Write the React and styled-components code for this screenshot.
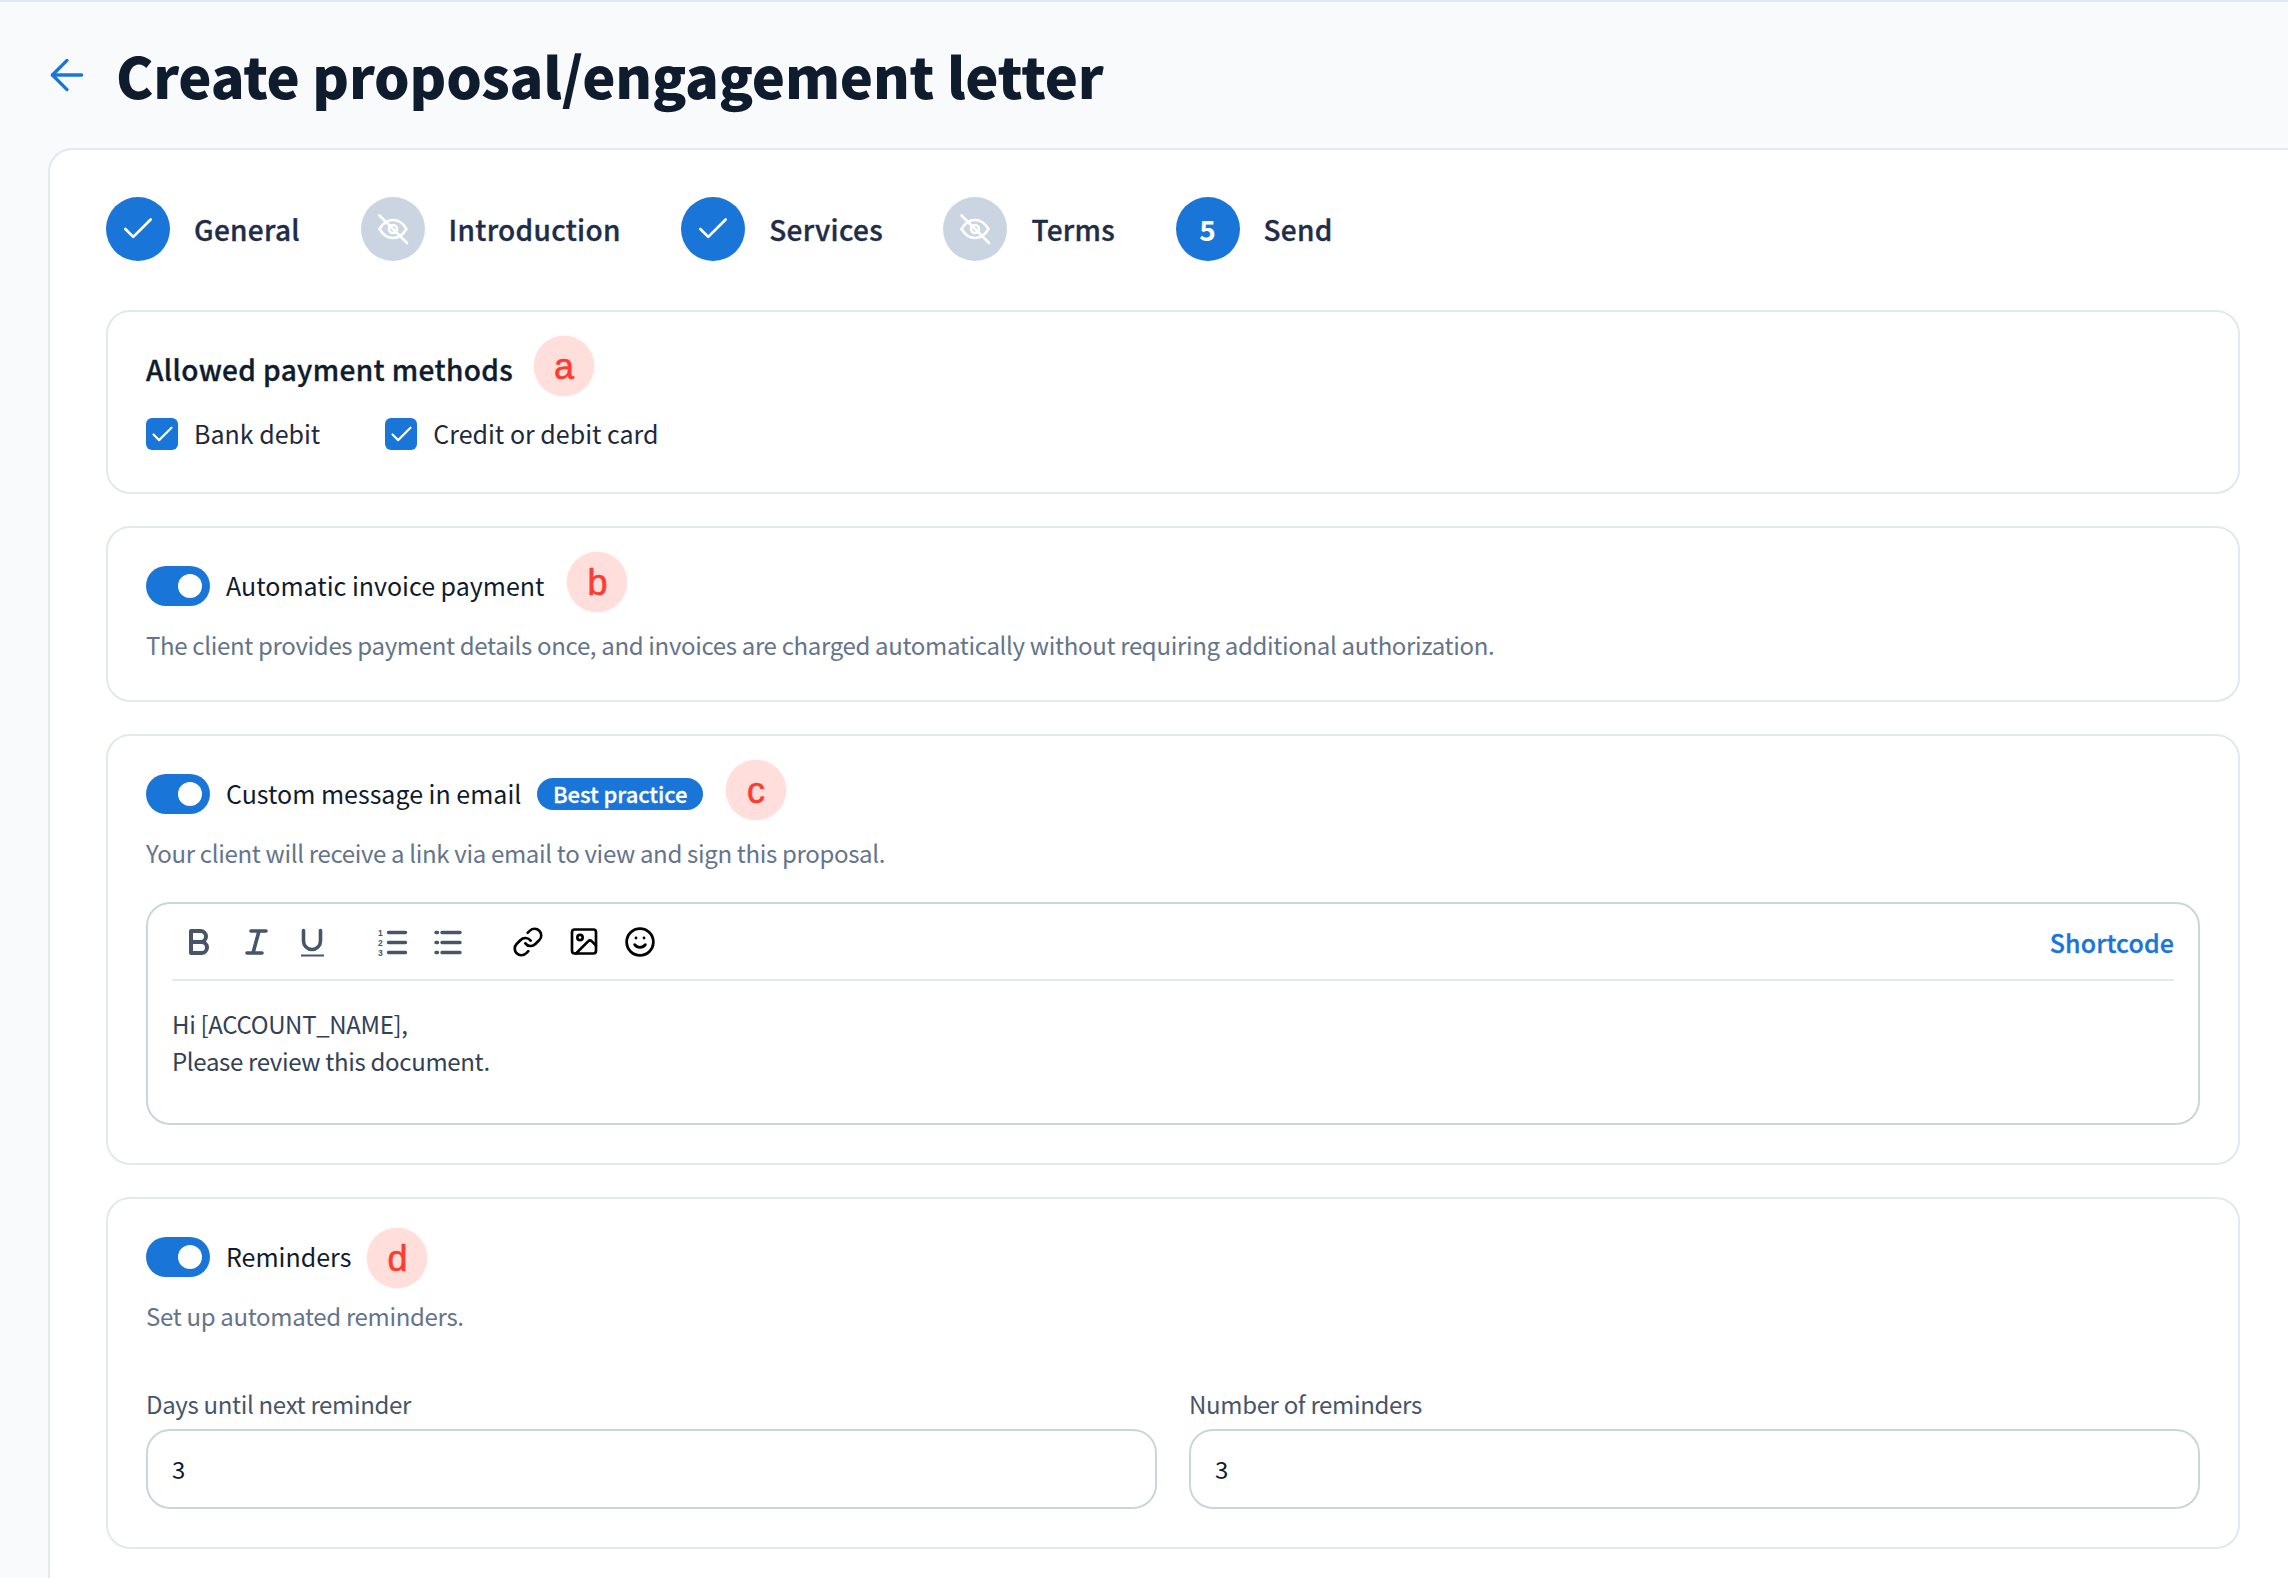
import React from "react";
import styled, { createGlobalStyle } from "styled-components";
import { ArrowLeft, Check, Link, Image, Smile } from "lucide-react";

const GlobalStyle = createGlobalStyle`
  html, body {
    margin: 0;
    padding: 0;
    height: 1578px;
    overflow: hidden;
    background: #f8fafc;
    font-family: "Noto Sans CJK SC", "Noto Sans", sans-serif;
  }
  * { box-sizing: border-box; }
`;

const steps = [
  { label: "General", state: "done" },
  { label: "Introduction", state: "hidden" },
  { label: "Services", state: "done" },
  { label: "Terms", state: "hidden" },
  { label: "Send", state: "current", number: 5 },
];

const HiddenIcon = () => (
  <EyeSvg viewBox="0 0 32 32">
    <path d="M2.5 16C7 8.5 12 7 16 7s9 1.5 13.5 9C25 23.5 20 25 16 25S7 23.5 2.5 16Z" />
    <circle cx="16" cy="16" r="4" />
    <path d="M2.5 2.5l27.5 27.5" strokeLinecap="round" />
  </EyeSvg>
);

const BoldIcon = () => (
  <ToolSvg viewBox="0 0 32 32">
    <path d="M7 5h9.5a5.5 5.5 0 0 1 0 11H7ZM7 16h10.5a5.5 5.5 0 0 1 0 11H7Z" strokeWidth="4" strokeLinejoin="round" />
  </ToolSvg>
);

const ItalicIcon = () => (
  <ToolSvg viewBox="0 0 32 32">
    <path d="M11 5h15M7 27h15M19 5l-6 22" strokeWidth="3.6" strokeLinecap="round" />
  </ToolSvg>
);

const UnderlineIcon = () => (
  <ToolSvg viewBox="0 0 32 32">
    <path d="M7.5 4.5V15a8.5 8.5 0 0 0 17 0V4.5" strokeWidth="3.6" strokeLinecap="round" />
    <path d="M5 29.5h23" strokeWidth="2" />
  </ToolSvg>
);

const OrderedIcon = () => (
  <ToolSvg viewBox="0 0 32 32">
    <path d="M12.5 6.5h17M12.5 16.5h17M12.5 26.5h17" strokeWidth="3.4" strokeLinecap="round" />
    <ListDigit x="2" y="9.5">1</ListDigit>
    <ListDigit x="2" y="19.5">2</ListDigit>
    <ListDigit x="2" y="29.5">3</ListDigit>
  </ToolSvg>
);

const BulletIcon = () => (
  <ToolSvg viewBox="0 0 32 32">
    <path d="M10 6.5h18M10 16.5h18M10 26.5h18" strokeWidth="3.4" strokeLinecap="round" />
    <path d="M4 6.5h1.5M4 16.5h1.5M4 26.5h1.5" strokeWidth="3.4" strokeLinecap="round" />
  </ToolSvg>
);

const Toggle = () => (
  <ToggleTrack>
    <ToggleKnob />
  </ToggleTrack>
);

const App = () => {
  return (
    <>
      <GlobalStyle />
      <Page>
        <Header>
          <BackButton>
            <ArrowLeft size={50} strokeWidth={1.6} />
          </BackButton>
          <Title>Create proposal/engagement letter</Title>
        </Header>
        <Panel>
          <Stepper>
            {steps.map((step) => (
              <Step key={step.label}>
                <StepCircle $state={step.state}>
                  {step.state === "done" && <Check size={38} strokeWidth={1.7} />}
                  {step.state === "hidden" && <HiddenIcon />}
                  {step.number}
                </StepCircle>
                <StepLabel>{step.label}</StepLabel>
              </Step>
            ))}
          </Stepper>

          <Cards>
            <Card $h={184}>
              <TitleRow>
                <CardTitle>Allowed payment methods</CardTitle>
                <Marker $left={21} $shift={-4}>a</Marker>
              </TitleRow>
              <Checks>
                <CheckItem>
                  <CheckBox><Check size={27} strokeWidth={1.9} /></CheckBox>
                  <span>Bank debit</span>
                </CheckItem>
                <CheckItem>
                  <CheckBox><Check size={27} strokeWidth={1.9} /></CheckBox>
                  <span>Credit or debit card</span>
                </CheckItem>
              </Checks>
            </Card>

            <Card $h={176}>
              <ToggleRow>
                <Toggle />
                <ToggleLabel>Automatic invoice payment</ToggleLabel>
                <Marker $left={23} $shift={-4}>b</Marker>
              </ToggleRow>
              <Description>
                The client provides payment details once, and invoices are charged automatically without requiring additional authorization.
              </Description>
            </Card>

            <Card $h={431}>
              <ToggleRow>
                <Toggle />
                <ToggleLabel>Custom message in email</ToggleLabel>
                <Pill>Best practice</Pill>
                <Marker $left={23} $shift={-4}>c</Marker>
              </ToggleRow>
              <Description>Your client will receive a link via email to view and sign this proposal.</Description>
              <Editor>
                <Toolbar>
                  <ToolGroup>
                    <BoldIcon />
                    <ItalicIcon />
                    <UnderlineIcon />
                  </ToolGroup>
                  <ToolGroup>
                    <OrderedIcon />
                    <BulletIcon />
                  </ToolGroup>
                  <ToolGroup>
                    <BlackTool><Link size={36} strokeWidth={2} /></BlackTool>
                    <BlackTool><Image size={39} strokeWidth={2} /></BlackTool>
                    <BlackTool><Smile size={34} strokeWidth={2.1} /></BlackTool>
                  </ToolGroup>
                  <Shortcode>Shortcode</Shortcode>
                </Toolbar>
                <EditorBody>
                  <div>Hi [ACCOUNT_NAME],</div>
                  <div>Please review this document.</div>
                </EditorBody>
              </Editor>
            </Card>

            <Card $h={352}>
              <ToggleRow>
                <Toggle />
                <ToggleLabel>Reminders</ToggleLabel>
                <Marker $left={16} $shift={1}>d</Marker>
              </ToggleRow>
              <Description>Set up automated reminders.</Description>
              <Fields>
                <Field>
                  <FieldLabel>Days until next reminder</FieldLabel>
                  <InputBox>3</InputBox>
                </Field>
                <Field>
                  <FieldLabel>Number of reminders</FieldLabel>
                  <InputBox>3</InputBox>
                </Field>
              </Fields>
            </Card>
          </Cards>
        </Panel>
      </Page>
    </>
  );
};

export default App;

const Page = styled.div`
  height: 1578px;
  overflow: hidden;
  border-top: 2px solid #e2e8f0;
  background: #f8fafc;
`;

const Header = styled.header`
  display: flex;
  align-items: center;
  height: 146px;
  padding-left: 42px;
`;

const BackButton = styled.div`
  display: flex;
  width: 74px;
  color: #1976d8;
`;

const Title = styled.h1`
  margin: 0 0 1px;
  font-size: 56px;
  line-height: 76px;
  font-weight: 900;
  letter-spacing: -0.22px;
  color: #0f1c2e;
`;

const Panel = styled.main`
  margin-left: 48px;
  padding: 47px 48px 0 56px;
  height: 1500px;
  background: #fff;
  border: 2px solid #e2e8f0;
  border-right: 0;
  border-bottom: 0;
  border-top-left-radius: 24px;
`;

const Stepper = styled.div`
  display: flex;
  gap: 60.5px;
  height: 64px;
`;

const Step = styled.div`
  display: flex;
  align-items: center;
  gap: 24px;
`;

const StepCircle = styled.div`
  display: flex;
  align-items: center;
  justify-content: center;
  width: 64px;
  height: 64px;
  border-radius: 50%;
  color: #fff;
  font-size: 28px;
  font-weight: 700;
  background: ${({ $state }) => ($state === "hidden" ? "#cbd5e1" : "#1976d8")};
`;

const EyeSvg = styled.svg`
  width: 32px;
  height: 32px;
  fill: none;
  stroke: #fff;
  stroke-width: 2.6;
`;

const StepLabel = styled.span`
  font-size: 28px;
  font-weight: 500;
  letter-spacing: 0.3px;
  color: #1f2d48;
  -webkit-text-stroke: 0.35px #1f2d48;
`;

const Cards = styled.div`
  display: flex;
  flex-direction: column;
  gap: 32px;
  margin-top: 49px;
`;

const Card = styled.section`
  height: ${({ $h }) => $h}px;
  padding: 38px 38px 0;
  border: 2px solid #e2e8f0;
  border-radius: 24px;
  background: #fff;
`;

const TitleRow = styled.div`
  display: flex;
  align-items: center;
  height: 40px;
`;

const CardTitle = styled.h2`
  margin: 0 0 2px;
  font-size: 28px;
  font-weight: 500;
  letter-spacing: 0.38px;
  color: #0f1c2e;
  -webkit-text-stroke: 0.35px #0f1c2e;
`;

const Marker = styled.span`
  display: flex;
  align-items: center;
  justify-content: center;
  flex: none;
  width: 60px;
  height: 60px;
  margin: -10px 0 -10px ${({ $left }) => $left}px;
  padding-top: 2px;
  transform: translateY(${({ $shift }) => $shift}px);
  border-radius: 50%;
  background: #ffdedb;
  box-shadow: 0 0 2px #ffdedb;
  color: #ff3b30;
  font-family: "Liberation Sans", sans-serif;
  font-size: 36px;
  -webkit-text-stroke: 0.6px #ff3b30;
`;

const Checks = styled.div`
  display: flex;
  gap: 65px;
  margin-top: 28px;
`;

const CheckItem = styled.label`
  display: flex;
  align-items: center;
  gap: 16px;
  height: 32px;
  font-size: 25px;
  color: #1e293b;

  span:last-child {
    margin-bottom: 2px;
  }
`;

const CheckBox = styled.span`
  display: flex;
  align-items: center;
  justify-content: center;
  flex: none;
  width: 32px;
  height: 32px;
  border-radius: 6px;
  background: #1976d8;
  color: #fff;
`;

const ToggleRow = styled.div`
  display: flex;
  align-items: center;
  height: 40px;
`;

const ToggleTrack = styled.span`
  display: flex;
  justify-content: flex-end;
  flex: none;
  width: 64px;
  height: 40px;
  padding: 8px;
  border-radius: 20px;
  background: #1976d8;
`;

const ToggleKnob = styled.span`
  width: 24px;
  height: 24px;
  border-radius: 50%;
  background: #fff;
`;

const ToggleLabel = styled.span`
  margin: 0 0 2px 16px;
  font-size: 25px;
  color: #0f1c2e;
`;

const Pill = styled.span`
  display: flex;
  align-items: center;
  height: 32px;
  margin-left: 16px;
  padding: 0 15.5px 2px;
  border-radius: 16px;
  background: #1976d8;
  color: #fff;
  font-size: 22px;
  font-weight: 500;
  letter-spacing: -0.05px;
  -webkit-text-stroke: 0.3px #fff;
`;

const Description = styled.p`
  margin: 19px 0 0;
  font-size: 24px;
  line-height: 40px;
  letter-spacing: -0.33px;
  color: #64748b;
`;

const Editor = styled.div`
  height: 223px;
  margin-top: 29px;
  padding: 0 24px;
  border: 2px solid #cbd5e1;
  border-radius: 24px;
`;

const Toolbar = styled.div`
  display: flex;
  align-items: center;
  gap: 48px;
  height: 77px;
  padding-left: 12px;
  border-bottom: 2px solid #e2e8f0;
`;

const ToolGroup = styled.div`
  display: flex;
  align-items: center;
  gap: 24px;
`;

const ToolSvg = styled.svg`
  width: 32px;
  height: 32px;
  flex: none;
  fill: none;
  stroke: #475569;
  overflow: visible;
`;

const ListDigit = styled.text`
  font-family: "Liberation Sans", sans-serif;
  font-size: 8.5px;
  font-weight: 700;
  fill: #475569;
  stroke: none;
`;

const BlackTool = styled.span`
  display: flex;
  align-items: center;
  justify-content: center;
  width: 32px;
  height: 32px;
  color: #000;
`;

const Shortcode = styled.span`
  margin-left: auto;
  font-size: 25px;
  font-weight: 500;
  letter-spacing: 0.1px;
  color: #1976d8;
  -webkit-text-stroke: 0.3px #1976d8;
`;

const EditorBody = styled.div`
  padding-top: 24px;
  font-size: 24px;
  line-height: 37px;
  letter-spacing: -0.33px;
  color: #334155;
`;

const Fields = styled.div`
  display: grid;
  grid-template-columns: 1fr 1fr;
  gap: 32px;
  margin-top: 48px;
`;

const Field = styled.div`
  display: flex;
  flex-direction: column;
`;

const FieldLabel = styled.label`
  font-size: 24px;
  line-height: 40px;
  letter-spacing: -0.33px;
  color: #475569;
`;

const InputBox = styled.div`
  display: flex;
  align-items: center;
  height: 80px;
  margin-top: 5px;
  padding: 0 24px 2px;
  border: 2px solid #cbd5e1;
  border-radius: 24px;
  font-size: 24px;
  color: #0f1c2e;
`;
